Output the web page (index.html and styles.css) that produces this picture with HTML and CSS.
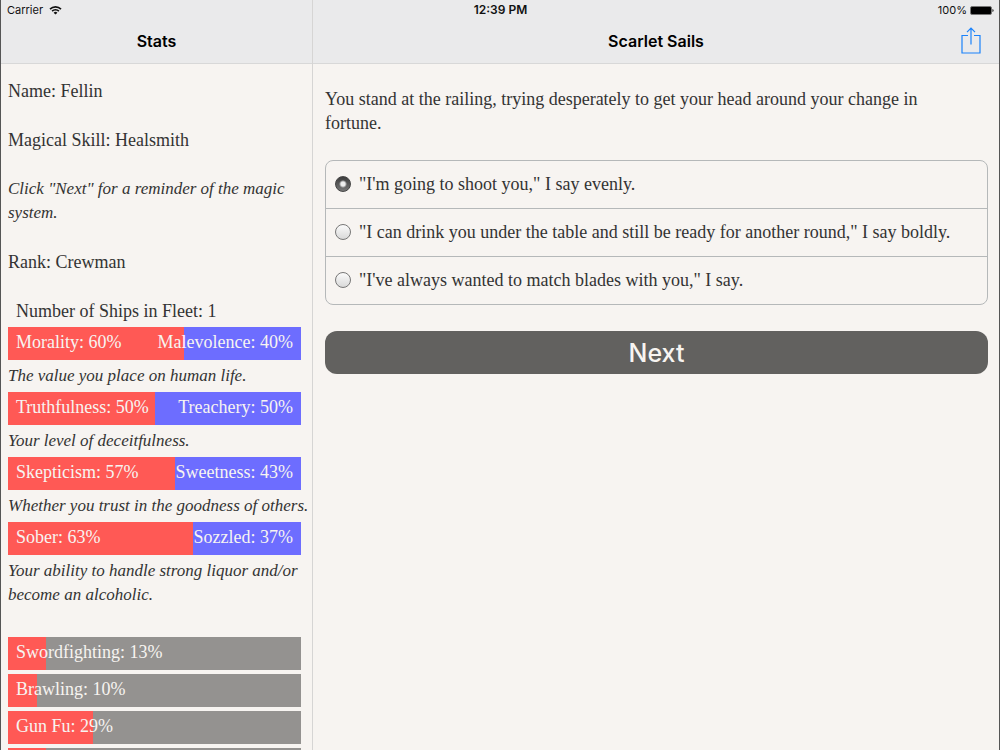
FILE: index.html
```html
<!DOCTYPE html>
<html lang="en">
<head>
    <meta charset="UTF-8">
    <meta name="viewport" content="width=device-width, initial-scale=1.0">
    <title>Scarlet Sails</title>
    <link rel="stylesheet" href="styles.css">
</head>
<body>
    <!-- status bar floats over both panes -->
    <div class="status-bar">
        <div class="carrier">
            Carrier
            <svg width="13" height="10" viewBox="0 0 13 10" fill="none" stroke="#111" stroke-width="1.6">
                <path d="M1 4.1a7.8 7.8 0 0 1 11 0M3.1 6.1a4.8 4.8 0 0 1 6.8 0" />
                <path d="M6.5 9.6L4.6 7.7a2.7 2.7 0 0 1 3.8 0z" fill="#111" stroke="none" />
            </svg>
        </div>
        <div class="clock">12:39 PM</div>
        <div class="battery">
            100%
            <svg width="24" height="9" viewBox="0 0 24 9">
                <rect x="0.5" y="0.5" width="21" height="8" rx="1.5" fill="#000" stroke="#777" />
                <path d="M22.5 3v3q1-.4 1-1.5t-1-1.5z" fill="#000" />
            </svg>
        </div>
    </div>

    <div class="split-view">
        <aside class="pane stats-pane">
            <header class="nav-bar"><h1>Stats</h1></header>
            <div class="stats">
                <p>Name: Fellin</p>
                <p>Magical Skill: Healsmith</p>
                <p><i>Click "Next" for a reminder of the magic system.</i></p>
                <p>Rank: Crewman</p>
                <div class="bars">
                    <div class="stat-text">Number of Ships in Fleet: 1</div>
                    <div class="bar opposed">
                        <div class="fill" style="width: 60%"></div>
                        <span>Morality: 60%</span><span>Malevolence: 40%</span>
                    </div>
                    <i>The value you place on human life.</i>
                    <div class="bar opposed">
                        <div class="fill" style="width: 50%"></div>
                        <span>Truthfulness: 50%</span><span>Treachery: 50%</span>
                    </div>
                    <i>Your level of deceitfulness.</i>
                    <div class="bar opposed">
                        <div class="fill" style="width: 57%"></div>
                        <span>Skepticism: 57%</span><span>Sweetness: 43%</span>
                    </div>
                    <i>Whether you trust in the goodness of others.</i>
                    <div class="bar opposed">
                        <div class="fill" style="width: 63%"></div>
                        <span>Sober: 63%</span><span>Sozzled: 37%</span>
                    </div>
                    <i>Your ability to handle strong liquor and/or become an alcoholic.</i>
                </div>
                <div class="bars skills">
                    <div class="bar">
                        <div class="fill" style="width: 13%"></div>
                        <span>Swordfighting: 13%</span>
                    </div>
                    <div class="bar">
                        <div class="fill" style="width: 10%"></div>
                        <span>Brawling: 10%</span>
                    </div>
                    <div class="bar">
                        <div class="fill" style="width: 29%"></div>
                        <span>Gun Fu: 29%</span>
                    </div>
                    <div class="bar">
                        <div class="fill" style="width: 13%"></div>
                    </div>
                </div>
            </div>
        </aside>

        <main class="pane">
            <header class="nav-bar">
                <h1>Scarlet Sails</h1>
                <button class="share" type="button" aria-label="Share">
                    <svg width="20" height="27" viewBox="0 0 20 27" fill="none" stroke="#1a82fb" stroke-width="1.2">
                        <path d="M7 8.5H1v17.5h18V8.5h-6M10 17.5V1.5M6 5.2l4-4 4 4" />
                    </svg>
                </button>
            </header>
            <form class="story">
                <p>You stand at the railing, trying desperately to get your head around your change in fortune.</p>
                <div class="choices">
                    <label><input type="radio" name="choice" checked> "I'm going to shoot you," I say evenly.</label>
                    <label><input type="radio" name="choice"> "I can drink you under the table and still be ready for another round," I say boldly.</label>
                    <label><input type="radio" name="choice"> "I've always wanted to match blades with you," I say.</label>
                </div>
                <button class="next" type="button">Next</button>
            </form>
        </main>
    </div>
</body>
</html>
```
FILE: styles.css
```css
* {
    box-sizing: border-box;
}
body {
    margin: 0;
    background-color: #f7f4f1;
    color: #333;
    font-family: Palatino, "Liberation Serif", serif;
    font-size: 18px;
    line-height: 24px;
}
p {
    margin: 0;
}
i {
    font-size: 17px;
    vertical-align: top;
}
.status-bar {
    position: absolute;
    top: 0;
    left: 0;
    right: 0;
    display: grid;
    grid-template-columns: 1fr auto 1fr;
    align-items: center;
    height: 20px;
    padding: 0 6px 0 7px;
    color: #111;
    font-family: Inter, sans-serif;
    font-size: 11px;
    line-height: 20px;
}
.carrier, .battery {
    display: flex;
    align-items: center;
    gap: 6px;
}
.battery {
    justify-content: flex-end;
    gap: 3px;
}
.clock {
    font-size: 12px;
    font-weight: 600;
}
.split-view {
    display: grid;
    grid-template-columns: 312px 1fr;
    height: 100vh;
    overflow: hidden;
    border-left: 1px solid #555;
    border-right: 1px solid #555;
}
.pane {
    min-width: 0;
    overflow: hidden;
}
.stats-pane {
    border-right: 1px solid #d6d5d4;
}
.nav-bar {
    display: grid;
    grid-template-columns: 1fr auto 1fr;
    align-items: center;
    height: 64px;
    padding: 18px 18px 0 18px;
    border-bottom: 1px solid #d8d8d8;
    background-color: #eaeaeb;
}
.nav-bar h1 {
    grid-column: 2;
    margin: 0;
    color: #000;
    font-family: Inter, sans-serif;
    font-size: 16px;
    font-weight: 600;
}
.share {
    justify-self: end;
    display: flex;
    padding: 0;
    background: none;
    border: none;
    cursor: pointer;
}
.stats {
    display: flex;
    flex-direction: column;
    gap: 25px;
    padding: 15px 2px 0 7px;
}
.bars {
    display: flex;
    flex-direction: column;
    gap: 4px;
}
.skills {
    margin-top: 5px;
}
.stat-text {
    padding: 0 8px;
}
.bar {
    position: relative;
    display: flex;
    justify-content: space-between;
    height: 33px;
    margin-right: 9px;
    padding: 3px 8px;
    background-color: #949290;
    color: #f7f4f1;
}
.bar.opposed {
    background-color: #6d6dff;
}
.bar .fill {
    position: absolute;
    top: 0;
    bottom: 0;
    left: 0;
    background-color: #ff5955;
}
.bar span {
    position: relative;
}
.story {
    display: flex;
    flex-direction: column;
    padding: 23px 11px 23px 12px;
}
.story p {
    padding-right: 40px;
}
.choices {
    margin: 25px 0 26px;
    border: 1px solid #b5b8b9;
    border-radius: 8px;
}
.choices label {
    display: flex;
    align-items: center;
    gap: 8px;
    padding: 11px 9px 12px;
    cursor: pointer;
}
.choices label + label {
    border-top: 1px solid #b5b8b9;
}
.choices input {
    appearance: none;
    flex: none;
    width: 16px;
    height: 16px;
    margin: 0;
    border: 1px solid #777;
    border-radius: 50%;
    background: linear-gradient(#fbfbfb, #d9d9d9);
}
.choices input:checked {
    border-color: #444;
    background: radial-gradient(circle, #eee 2px, transparent 4px), linear-gradient(#3c3c3c, #777);
}
.next {
    height: 43px;
    padding: 0;
    background-color: #62615f;
    color: #f7f4f1;
    border: none;
    border-radius: 12px;
    cursor: pointer;
    font-family: Inter, sans-serif;
    font-size: 25px;
    font-weight: 500;
}
```
